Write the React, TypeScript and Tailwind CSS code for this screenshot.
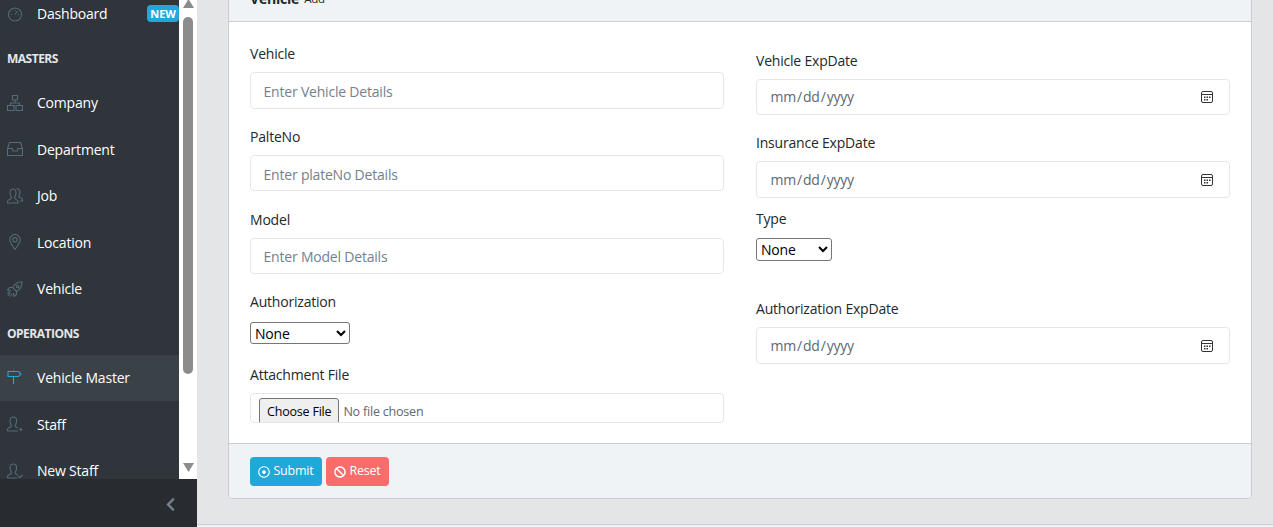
import { FaBan, FaChevronLeft, FaRegDotCircle } from "react-icons/fa";

const FONT = "font-['Open_Sans','Noto_Sans',sans-serif]";

function NavIcon({ children, color = "#536c79" }: { children: React.ReactNode; color?: string }) {
  return (
    <svg width="16" height="16" viewBox="0 0 16 16" fill="none" stroke={color} strokeWidth="1.1" className="shrink-0">
      {children}
    </svg>
  );
}

function NavItem({ label, icon, active, badge }: { label: string; icon: React.ReactNode; active?: boolean; badge?: string }) {
  return (
    <div className={`flex h-[46.5px] items-center pl-[7px] text-[14px] tracking-[-0.2px] text-white ${active ? "bg-[#3a4248]" : ""}`}>
      <span className="flex w-[30px] shrink-0">{icon}</span>
      <span>{label}</span>
      {badge && (
        <span className="ml-auto rounded-[4px] bg-[#20a8d8] px-[3px] text-[11px] leading-[17px] font-bold tracking-normal text-white">{badge}</span>
      )}
    </div>
  );
}

function NavTitle({ label }: { label: string }) {
  return <div className="flex h-[42.5px] items-center pt-[1px] pl-[7px] text-[12px] font-bold tracking-[-0.5px] text-[#e4e7ea]">{label}</div>;
}

function Sidebar() {
  return (
    <aside className="flex h-full w-[197px] shrink-0 flex-col">
      <div className="flex min-h-0 flex-1">
        <nav className="-mt-[9.5px] w-[179px] shrink-0 overflow-visible bg-[#2f353a]">
          <NavItem
            label="Dashboard"
            badge="NEW"
            icon={
              <NavIcon>
                <circle cx="8" cy="8.5" r="6.5" />
                <path d="M8 8.5 10.5 5M4 8.5H5M8 4V5M12 8.5h-1" />
              </NavIcon>
            }
          />
          <NavTitle label="MASTERS" />
          <NavItem
            label="Company"
            icon={
              <NavIcon>
                <path d="M5.500 .5h5v4.500h-5zM.5 10.500h6.500v5H.5zM9 10.500h6.500v5H9zM8 5v3M3.500 10.500V8h9v2.500" />
              </NavIcon>
            }
          />
          <NavItem
            label="Department"
            icon={
              <NavIcon>
                <path d="M.5 7.500 2.500 1.500h11l2 6v7H.5zM.5 7.500h4.500l1 2.500h4l1-2.500h4.500" />
              </NavIcon>
            }
          />
          <NavItem
            label="Job"
            icon={
              <NavIcon>
                <path d="M.5 15v-1.500c0-1.500 4-2.300 4-3.800C3.500 8 3 6.500 3 5c0-2.500 1.200-4 3-4s3 1.500 3 4c0 1.500-.5 3-1.500 4.700 0 1.500 3.500 2.300 3.500 3.800V15zM9.500 1c1.800-.7 3.500.8 3.500 3 0 1.500-.5 3-1.300 4.300.2 1.300 3.800 1.800 3.800 3.500V13h-2.500" />
              </NavIcon>
            }
          />
          <NavItem
            label="Location"
            icon={
              <NavIcon>
                <path d="M8 15.500C5.500 11.500 2.800 8.800 2.800 5.700a5.200 5.200 0 0 1 10.400 0c0 3.100-2.700 5.800-5.200 9.800Z" />
                <circle cx="8" cy="5.700" r="2.200" />
              </NavIcon>
            }
          />
          <NavItem
            label="Vehicle"
            icon={
              <NavIcon>
                <path d="M15 1c-4.500-.3-7 1.500-9.500 5.500l4 4c4-2.500 5.800-5 5.500-9.500ZM5.500 6.500H2.500L.5 9l3.500.5M9.500 10.500V13.500L7 15.500l-.5-3.500M3.500 11.500 1 15M2.500 10.500 .5 12.500M5 13l-1.500 2.500" />
                <circle cx="10.500" cy="5.500" r="1.300" />
              </NavIcon>
            }
          />
          <NavTitle label="OPERATIONS" />
          <NavItem
            active
            label="Vehicle Master"
            icon={
              <NavIcon color="#20a8d8">
                <path d="M1 1.500h10.500l2.500 2.500-2.500 2.500H1zM6.500 6.500V14M6.500 .5v1" />
              </NavIcon>
            }
          />
          <NavItem
            label="Staff"
            icon={
              <NavIcon>
                <path d="M.5 15v-1.500c0-1.500 4-2.300 4-3.800C3.500 8 3 6.500 3 5c0-2.500 1.500-4 3.300-4s3.300 1.500 3.300 4c0 1.500-.5 3-1.500 4.700 0 1 1.500 1.700 2.700 2.400M.5 15H11M12 13.500h3.500M13.700 11.700v3.600" />
              </NavIcon>
            }
          />
          <NavItem
            label="New Staff"
            icon={
              <NavIcon>
                <path d="M.5 15v-1.500c0-1.500 4-2.300 4-3.800C3.500 8 3 6.500 3 5c0-2.500 1.500-4 3.300-4s3.300 1.500 3.300 4c0 1.500-.5 3-1.500 4.700 0 1 1.500 1.700 2.700 2.400M.5 15H10M11 13l1.700 1.800L15.500 12" />
              </NavIcon>
            }
          />
        </nav>
        <div className="relative z-10 flex w-[18px] shrink-0 flex-col items-center bg-white">
          <svg width="11" height="9" viewBox="0 0 11 9" className="-mt-[1px] shrink-0 fill-[#8c8c8c]">
            <path d="M5.500 0 11 9H0Z" />
          </svg>
          <div className="mt-[9px] h-[357px] w-[10px] shrink-0 rounded-[5px] bg-[#8c8c8c]" />
          <svg width="11" height="9" viewBox="0 0 11 9" className="mt-auto mb-[7px] shrink-0 fill-[#8c8c8c]">
            <path d="M0 0H11L5.500 9Z" />
          </svg>
        </div>
      </div>
      <div className="relative z-10 flex h-[48px] shrink-0 items-center justify-end bg-[#282c31] pt-[3px] pr-[19px] text-[#73818f]">
        <FaChevronLeft size={15} />
      </div>
    </aside>
  );
}

const inputClass =
  "block h-[36.5px] w-full rounded-[4px] border border-[#e4e7ea] bg-white px-[12.5px] text-[14px] tracking-[-0.2px] text-[#5c6873] placeholder:text-[#73818f]";

function Field({ label, children }: { label: string; children: React.ReactNode }) {
  return (
    <>
      <label className="mb-[8px] block h-[21px] text-[14px] leading-[21px] tracking-[-0.2px] text-[#23282c]">{label}</label>
      {children}
    </>
  );
}

// the native picker glyph differs per platform, so it's hidden and redrawn
function DateInput({ className }: { className: string }) {
  return (
    <div className={`relative ${className}`}>
      <input type="date" className={`${inputClass} [&::-webkit-calendar-picker-indicator]:opacity-0`} />
      <svg width="14" height="14" viewBox="0 0 14 14" fill="none" className="pointer-events-none absolute top-[11.5px] right-[16px]">
        <rect x="1.500" y="1.500" width="11" height="11" rx="1.500" stroke="#333" />
        <path d="M2 4.500h10" stroke="#333" />
        <path d="M4 6.500h1.500v1.500H4zM6.500 6.500H8v1.500H6.500zM9 6.500h1.500v1.500H9zM4 9h1.500v1.500H4zM6.500 9H8v1.500H6.500z" fill="#333" />
      </svg>
    </div>
  );
}

export default function App() {
  return (
    <div className={`flex h-[527px] w-[1273px] overflow-hidden bg-[#e4e5e6] ${FONT}`}>
      <Sidebar />
      <main className="flex min-w-0 flex-1 flex-col">
        <div className="mr-[21px] ml-[31px] -mt-[25px] overflow-hidden rounded-[4px] border border-[#c8ced3] bg-white">
          <div className="flex h-[46px] items-center gap-[5px] border-b border-[#c8ced3] bg-[#f0f3f5] px-[21px] text-[14px] tracking-[-0.2px] text-[#23282c]">
            <strong>Vehicle</strong>
            <small className="text-[11.500px]">Add</small>
          </div>
          <div className="grid h-[421px] grid-cols-2 gap-x-[32px] px-[21px]">
            <div className="pt-[21px]">
              <Field label="Vehicle">
                <input className={`${inputClass} mb-[17.25px] pt-[2px]`} placeholder="Enter Vehicle Details" />
              </Field>
              <Field label="PalteNo">
                <input className={`${inputClass} mb-[17.25px] pt-[2px]`} placeholder="Enter plateNo Details" />
              </Field>
              <Field label="Model">
                <input className={`${inputClass} mb-[17.25px] pt-[2px]`} placeholder="Enter Model Details" />
              </Field>
              <Field label="Authorization">
                <select className="mb-[22px] block h-[22px] w-[100px] translate-y-[2px] rounded-[3px] border border-[#767676] bg-white text-[14px] tracking-[-0.2px] text-black">
                  <option>None</option>
                </select>
              </Field>
              <Field label="Attachment File">
                <div className="h-[30px] overflow-hidden rounded-[4px] border border-[#e4e7ea] bg-white">
                  <input
                    type="file"
                    className="block w-full pt-[4px] pl-[8px] text-[12.500px] tracking-[-0.2px] text-[#5c6873] file:mr-[4px] file:h-[28px] file:rounded-[3px] file:border file:border-[#767676] file:bg-[#efefef] file:px-[7px] file:text-[12.500px] file:tracking-[-0.2px] file:text-black"
                  />
                </div>
              </Field>
            </div>
            <div className="pt-[27.500px]">
              <Field label="Vehicle ExpDate">
                <DateInput className="mb-[17px]" />
              </Field>
              <Field label="Insurance ExpDate">
                <DateInput className="mb-[10.500px]" />
              </Field>
              <Field label="Type">
                <select className="mb-[38px] block h-[23px] w-[76px] translate-y-[1px] rounded-[3px] border border-[#767676] bg-white text-[14px] tracking-[-0.2px] text-black">
                  <option>None</option>
                </select>
              </Field>
              <Field label="Authorization ExpDate">
                <DateInput className="" />
              </Field>
            </div>
          </div>
          <div className="flex h-[55px] items-start gap-[4px] border-t border-[#c8ced3] bg-[#f0f3f5] px-[21px] pt-[13px]">
            <button className="flex h-[29px] w-[72px] items-center justify-center gap-[3px] rounded-[4px] bg-[#20a8d8] text-[12.500px] tracking-[-0.2px] text-white">
              <FaRegDotCircle size={12} />
              Submit
            </button>
            <button className="flex h-[29px] w-[63px] items-center justify-center gap-[3px] rounded-[4px] bg-[#f86c6b] text-[12.500px] tracking-[-0.2px] text-white">
              <FaBan size={12} />
              Reset
            </button>
          </div>
        </div>
        <footer className="mt-[25px] flex-1 border-t border-[#c8ced3] bg-[#f0f3f5]" />
      </main>
    </div>
  );
}
